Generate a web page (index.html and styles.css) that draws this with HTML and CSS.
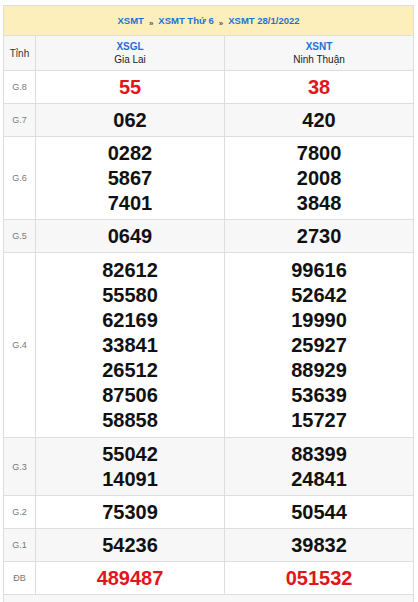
FILE: index.html
```html
<!DOCTYPE html>
<html lang="vi">
<head>
<meta charset="utf-8">
<title>XSMT 28/1/2022</title>
<link rel="stylesheet" href="styles.css">
</head>
<body>
<div class="page">
<table class="kq">
<colgroup><col class="c-label"><col class="c-prov"><col class="c-prov2"></colgroup>
<thead>
<tr class="crumbs">
<th colspan="3"><a class="crumb">XSMT</a><span class="sep">»</span><a class="crumb">XSMT Thứ 6</a><span class="sep">»</span><a class="crumb">XSMT 28/1/2022</a></th>
</tr>
<tr class="prov alt">
<th class="lbl">Tỉnh</th>
<th><a class="code">XSGL</a><span class="name">Gia Lai</span></th>
<th><a class="code">XSNT</a><span class="name">Ninh Thuận</span></th>
</tr>
</thead>
<tbody>
<tr><td class="lbl">G.8</td><td class="num red">55</td><td class="num red">38</td></tr>
<tr class="alt"><td class="lbl">G.7</td><td class="num">062</td><td class="num">420</td></tr>
<tr><td class="lbl">G.6</td>
<td class="num"><div>0282</div><div>5867</div><div>7401</div></td>
<td class="num"><div>7800</div><div>2008</div><div>3848</div></td></tr>
<tr class="alt"><td class="lbl">G.5</td><td class="num">0649</td><td class="num">2730</td></tr>
<tr class="tall"><td class="lbl">G.4</td>
<td class="num"><div>82612</div><div>55580</div><div>62169</div><div>33841</div><div>26512</div><div>87506</div><div>58858</div></td>
<td class="num"><div>99616</div><div>52642</div><div>19990</div><div>25927</div><div>88929</div><div>53639</div><div>15727</div></td></tr>
<tr class="alt"><td class="lbl">G.3</td>
<td class="num"><div>55042</div><div>14091</div></td>
<td class="num"><div>88399</div><div>24841</div></td></tr>
<tr><td class="lbl">G.2</td><td class="num">75309</td><td class="num">50544</td></tr>
<tr class="alt"><td class="lbl">G.1</td><td class="num">54236</td><td class="num">39832</td></tr>
<tr><td class="lbl">ĐB</td><td class="num red">489487</td><td class="num red">051532</td></tr>
<tr class="alt foot"><td colspan="3"></td></tr>
</tbody>
</table>
</div>
</body>
</html>
```

FILE: styles.css
```css
html, body {
  margin: 0;
  padding: 0;
  background: #fff;
  font-family: "Liberation Sans", Arial, sans-serif;
  color: #222;
}
.page {
  padding: 5px 0 0 3px;
}
.kq {
  width: 410px;
  border-collapse: collapse;
  table-layout: fixed;
}
.c-label { width: 32px; }
.c-prov { width: 189px; }
.c-prov2 { width: 189px; }
.kq th, .kq td {
  border: 1px solid #dedede;
  padding: 0;
  text-align: center;
  vertical-align: middle;
}
.kq .crumbs th {
  background: #fcefbb;
  height: 29px;
  font-size: 9.5px;
  font-weight: bold;
}
.crumb {
  color: #1f6fd6;
  text-decoration: none;
}
.sep {
  color: #555;
  font-size: 8px;
  margin: 0 5px;
  position: relative;
  top: 2px;
}
.kq .alt td, .kq .alt th {
  background: #f7f7f7;
}
.kq .prov th {
  height: 34px;
  font-weight: normal;
}
.kq .prov .lbl {
  font-size: 10px;
  color: #333;
}
.code {
  display: block;
  color: #1f6fd6;
  font-weight: bold;
  font-size: 10px;
  line-height: 13px;
  text-decoration: none;
}
.name {
  display: block;
  color: #222;
  font-size: 10px;
  line-height: 14px;
}
.kq .lbl {
  font-size: 9px;
  color: #777;
}
.kq .num {
  padding: 4px 0 3px;
  font-size: 20px;
  line-height: 25px;
  font-weight: bold;
  color: #111;
}
.kq .tall .num {
  padding: 5px 0 4px;
}
.kq .num.red {
  color: #e3141b;
}
.kq .foot td {
  height: 30px;
}
```
